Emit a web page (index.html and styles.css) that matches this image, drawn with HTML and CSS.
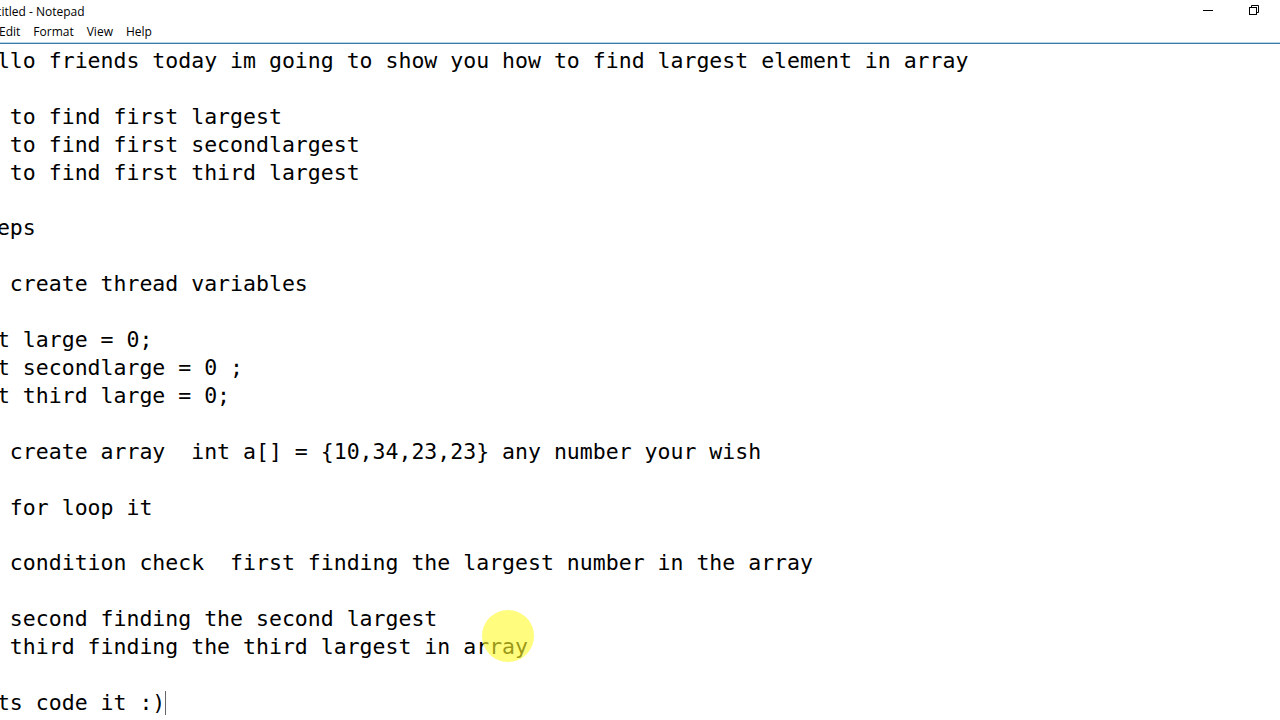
FILE: index.html
```html
<!DOCTYPE html>
<html>
<head>
 <link rel="stylesheet" href="styles.css">
</head>
<body>
  <div class="window">
    <div class="titlebar">
      <span class="title">Untitled - Notepad</span>
      <div class="controls">
        <span class="ctl minimize">
          <svg width="12" height="12" viewBox="0 0 12 12"><path d="M1 6.5h10" stroke="#000" stroke-width="1"/></svg>
        </span>
        <span class="ctl restore">
          <svg width="12" height="12" viewBox="0 0 12 12">
            <path d="M3.5 3.5V1.5h7v7h-2" fill="none" stroke="#000"/>
            <rect x="1.5" y="3.5" width="7" height="7" fill="none" stroke="#000"/>
          </svg>
        </span>
      </div>
    </div>

    <div class="menubar">
      <span class="menu file">File</span>
      <span class="menu">Edit</span>
      <span class="menu">Format</span>
      <span class="menu">View</span>
      <span class="menu">Help</span>
    </div>

    <div class="editor">
<pre class="text">hello friends today im going to show you how to find largest element in array

1. to find first largest
2. to find first secondlargest
3. to find first third largest

steps

1. create thread variables

int large = 0;
int secondlarge = 0 ;
int third large = 0;

2. create array  int a[] = {10,34,23,23} any number your wish

3. for loop it

4. condition check  first finding the largest number in the array

5. second finding the second largest
6. third finding the third largest in array

lets code it :)<span class="caret"></span></pre>
      <div class="pointer"></div>
    </div>
  </div>
</body>
</html>
```

FILE: styles.css
```css
html, body {
  margin: 0;
  padding: 0;
  background-color: #ffffff;
  overflow: hidden;
}

.window {
  width: 1280px;
  height: 720px;
  overflow: hidden;
  background-color: #ffffff;
}

.titlebar {
  height: 22px;
  display: flex;
  align-items: center;
  justify-content: space-between;
  font-family: "Open Sans", "Liberation Sans", sans-serif;
  font-size: 12px;
  color: #000;
}

/* window is scrolled off the left edge of the screen */
.title {
  margin-left: -19px;
}

.controls {
  display: flex;
  align-items: center;
  height: 22px;
  margin-top: -3px;
  margin-right: 3px;
}

.ctl {
  width: 46px;
  height: 20px;
  display: flex;
  align-items: center;
  justify-content: center;
}

.ctl svg {
  display: block;
}

.menubar {
  height: 20px;
  display: flex;
  align-items: center;
  gap: 13px;
  font-family: "Open Sans", "Liberation Sans", sans-serif;
  font-size: 12px;
  color: #000;
  border-bottom: 1px solid #3f7aa6;
  box-shadow: 0 -1px 0 #b5d6ea inset;
  margin-left: -33px;
  padding-bottom: 1px;
}

.menu {
  line-height: 18px;
}

.editor {
  position: relative;
  padding-top: 3px;
}

.text {
  margin: 0 0 0 -29px;
  font-family: "DejaVu Sans Mono", "Liberation Mono", monospace;
  font-size: 21.52px;
  line-height: 27.9px;
  color: #000;
  white-space: pre;
}

.caret {
  display: inline-block;
  width: 1px;
  height: 24px;
  background-color: #666;
  vertical-align: -5px;
}

/* highlight ring drawn round the mouse pointer */
.pointer {
  position: absolute;
  left: 482px;
  top: 566px;
  width: 52px;
  height: 52px;
  border-radius: 50%;
  background-color: rgba(255, 250, 40, 0.6);
}
```
